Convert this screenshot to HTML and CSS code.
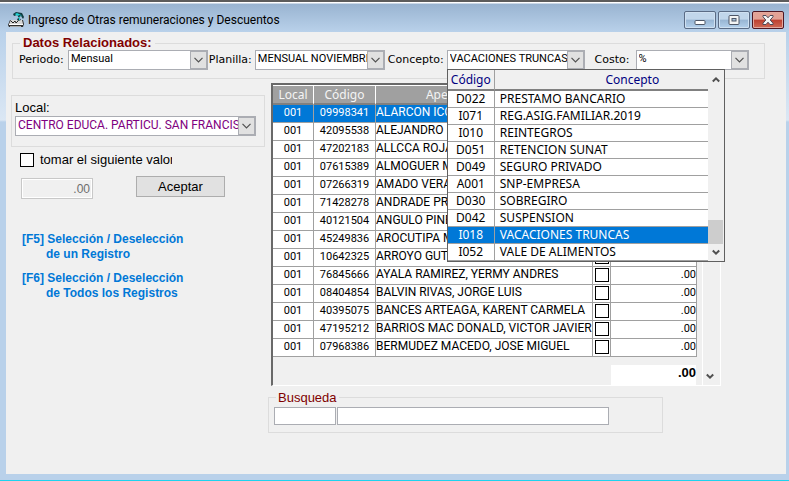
FILE: index.html
```html
<!DOCTYPE html>
<html lang="es">
<head>
<meta charset="utf-8">
<title>Ingreso de Otras remuneraciones y Descuentos</title>
<link rel="stylesheet" href="styles.css">
</head>
<body>
<svg class="symbols" width="0" height="0" aria-hidden="true">
  <symbol id="chevron" viewBox="0 0 9 6"><path d="M.5 .8 4.5 4.8 8.5 .8" fill="none" stroke="currentColor" stroke-width="1.2"/></symbol>
  <symbol id="arrow" viewBox="0 0 8 7"><path d="M.8 1.5 4 4.7 7.2 1.5" fill="none" stroke="currentColor" stroke-width="2"/></symbol>
</svg>
<div class="window">
  <header class="titlebar">
    <svg class="app-icon" viewBox="0 0 17 16" aria-hidden="true">
      <path d="M2 8h13l1 4-1 3H1l-1-2z" fill="#303030"/>
      <path d="M3 8h11l1 4H1z" fill="#d8d8d8"/>
      <path d="M1 12h14v1H1z" fill="#fff"/>
      <path d="M2 14h11v1H2z" fill="#aaa"/>
      <path d="m3 9 2 2 2-2 1 2 2-2" fill="none" stroke="#222"/>
      <path d="M5 2 8 0l6 1 2 4-1 2-2-3-2 1 2 3-3 1-1-2 2-1-2-3-3 1z" fill="#123c42"/>
      <path d="m7 2 2-1 4 2 1 2-2-2-3 1z" fill="#22d3d3"/>
      <path d="m10 5 2 2-1 1" fill="none" stroke="#22d3d3"/>
    </svg>
    <h1>Ingreso de Otras remuneraciones y Descuentos</h1>
    <div class="controls">
      <button type="button" aria-label="Minimizar"><svg viewBox="0 0 12 10"><rect x="1" y="5.5" width="10" height="4" rx="1" fill="#fff" stroke="#4e5666"/></svg></button>
      <button type="button" aria-label="Restaurar"><svg viewBox="0 0 12 10"><rect x="1" y=".5" width="10" height="9" rx="1" fill="#f4f4f4" stroke="#4e5666"/><rect x="4" y="3.5" width="4" height="2.5" fill="#a9c4de" stroke="#4e5666"/></svg></button>
      <button type="button" class="close" aria-label="Cerrar"><svg viewBox="0 0 12 10"><path d="M1 .5h3L6 2.8 8 .5h3v1.3L8.2 5 11 8.200V9.500H8L6 7.200 4 9.500H1V8.200L3.800 5 1 1.800z" fill="#f6f6f6" stroke="#4d4a58"/></svg></button>
    </div>
  </header>

  <main class="client">
    <fieldset class="filters">
      <legend>Datos Relacionados:</legend>
      <div class="filter-row">
        <label for="periodo">Periodo:</label>
        <div class="combo w-periodo"><select id="periodo"><option>Mensual</option></select><span class="drop"><svg><use href="#chevron"/></svg></span></div>
        <label for="planilla">Planilla:</label>
        <div class="combo w-planilla"><select id="planilla"><option>MENSUAL NOVIEMBRE</option></select><span class="drop"><svg><use href="#chevron"/></svg></span></div>
        <label for="concepto">Concepto:</label>
        <div class="combo w-concepto">
          <select id="concepto"><option>VACACIONES TRUNCAS</option></select><span class="drop"><svg><use href="#chevron"/></svg></span>
          <div class="popup">
            <table>
              <colgroup><col class="c-code"><col></colgroup>
              <thead><tr><th>Código</th><th class="wide">Concepto</th></tr></thead>
              <tbody>
                <tr><td>D022</td><td>PRESTAMO BANCARIO</td></tr>
                <tr><td>I071</td><td>REG.ASIG.FAMILIAR.2019</td></tr>
                <tr><td>I010</td><td>REINTEGROS</td></tr>
                <tr><td>D051</td><td>RETENCION SUNAT</td></tr>
                <tr><td>D049</td><td>SEGURO PRIVADO</td></tr>
                <tr><td>A001</td><td>SNP-EMPRESA</td></tr>
                <tr><td>D030</td><td>SOBREGIRO</td></tr>
                <tr><td>D042</td><td>SUSPENSION</td></tr>
                <tr class="selected"><td>I018</td><td>VACACIONES TRUNCAS</td></tr>
                <tr><td>I052</td><td>VALE DE ALIMENTOS</td></tr>
              </tbody>
            </table>
            <div class="popup-scroll">
              <svg class="up"><use href="#arrow"/></svg>
              <span class="thumb"></span>
              <svg><use href="#arrow"/></svg>
            </div>
          </div>
        </div>
        <label for="costo" class="costo">Costo:</label>
        <div class="combo w-costo"><select id="costo"><option>%</option></select><span class="drop"><svg><use href="#chevron"/></svg></span></div>
      </div>
    </fieldset>

    <div class="columns">
      <section class="side">
        <div class="local">
          <label for="local">Local:</label>
          <div class="combo"><select id="local"><option>CENTRO EDUCA. PARTICU. SAN FRANCISCO</option></select><span class="drop"><svg><use href="#chevron"/></svg></span></div>
        </div>
        <div class="take">
          <input type="checkbox" id="tomar"><label for="tomar">tomar el siguiente valor</label>
        </div>
        <div class="apply">
          <input type="text" value=".00" aria-label="Valor" disabled>
          <button type="button">Aceptar</button>
        </div>
        <div class="keys">
          <p>[F5] Selección / Deselección<br><span>de un Registro</span></p>
          <p>[F6] Selección / Deselección<br><span>de Todos los Registros</span></p>
        </div>
      </section>

      <section class="data">
        <div class="grid-frame">
          <div class="grid-main">
            <table class="people">
              <colgroup><col class="c-local"><col class="c-id"><col><col class="c-check"><col class="c-amount"></colgroup>
              <thead><tr><th>Local</th><th>Código</th><th>Apellidos y Nombres</th><th></th><th></th></tr></thead>
              <tbody>
                <tr class="selected"><td>001</td><td>09998341</td><td>ALARCON ICO</td><td><input type="checkbox" aria-label="09998341"></td><td>.00</td></tr>
                <tr><td>001</td><td>42095538</td><td>ALEJANDRO D</td><td><input type="checkbox" aria-label="42095538"></td><td>.00</td></tr>
                <tr><td>001</td><td>47202183</td><td>ALLCCA ROJA</td><td><input type="checkbox" aria-label="47202183"></td><td>.00</td></tr>
                <tr><td>001</td><td>07615389</td><td>ALMOGUER M</td><td><input type="checkbox" aria-label="07615389"></td><td>.00</td></tr>
                <tr><td>001</td><td>07266319</td><td>AMADO VERA</td><td><input type="checkbox" aria-label="07266319"></td><td>.00</td></tr>
                <tr><td>001</td><td>71428278</td><td>ANDRADE PR</td><td><input type="checkbox" aria-label="71428278"></td><td>.00</td></tr>
                <tr><td>001</td><td>40121504</td><td>ANGULO PINE</td><td><input type="checkbox" aria-label="40121504"></td><td>.00</td></tr>
                <tr><td>001</td><td>45249836</td><td>AROCUTIPA M</td><td><input type="checkbox" aria-label="45249836"></td><td>.00</td></tr>
                <tr><td>001</td><td>10642325</td><td>ARROYO GUT</td><td><input type="checkbox" aria-label="10642325"></td><td>.00</td></tr>
                <tr><td>001</td><td>76845666</td><td>AYALA RAMIREZ, YERMY ANDRES</td><td><input type="checkbox" aria-label="76845666"></td><td>.00</td></tr>
                <tr><td>001</td><td>08404854</td><td>BALVIN RIVAS, JORGE LUIS</td><td><input type="checkbox" aria-label="08404854"></td><td>.00</td></tr>
                <tr><td>001</td><td>40395075</td><td>BANCES ARTEAGA, KARENT CARMELA</td><td><input type="checkbox" aria-label="40395075"></td><td>.00</td></tr>
                <tr><td>001</td><td>47195212</td><td>BARRIOS MAC DONALD, VICTOR JAVIER</td><td><input type="checkbox" aria-label="47195212"></td><td>.00</td></tr>
                <tr><td>001</td><td>07968386</td><td>BERMUDEZ MACEDO, JOSE MIGUEL</td><td><input type="checkbox" aria-label="07968386"></td><td>.00</td></tr>
              </tbody>
            </table>
            <output class="total">.00</output>
          </div>
          <div class="grid-scroll"><svg><use href="#arrow"/></svg></div>
        </div>
        <fieldset class="search">
          <legend>Busqueda</legend>
          <div class="search-row">
            <input type="text" class="s-code" aria-label="Código">
            <input type="text" class="s-name" aria-label="Nombre">
          </div>
        </fieldset>
      </section>
    </div>
  </main>
</div>
</body>
</html>
```
FILE: styles.css
```css
* { box-sizing: border-box; }

body {
  margin: 0;
  color: #000;
  font: 12px/16px "Liberation Sans", Arial, sans-serif;
}

h1, p { margin: 0; }
.symbols { display: block; position: absolute; }

/* Window frame */
.window {
  display: flex;
  flex-direction: column;
  min-height: 100vh;
  padding: 0 3px 6px 6px;
  border-top: 2px solid #5c5c5c;
  border-bottom: 1px solid #1ed2ee;
  background: linear-gradient(#fff 0 1px, #99b4d1 2px, #b9d1ea 30px, #dbe7f4 118px, #b9d1ea 120px);
}

.titlebar {
  display: flex;
  align-items: center;
  height: 30px;
  padding: 6px 2px 0 2px;
}

.app-icon { width: 17px; height: 16px; margin-right: 3px; }

.titlebar h1 {
  flex: 1;
  font: 12px/18px Roboto, sans-serif;
}

.controls { display: flex; gap: 2px; }

.controls button {
  display: flex;
  align-items: center;
  justify-content: center;
  width: 32px;
  height: 18px;
  padding: 0;
  border: 1px solid #5a6b85;
  border-radius: 2px;
  background: linear-gradient(#c1d6eb 0 45%, #98b5d3 50%, #b4d0ec);
  box-shadow: inset 0 0 0 1px #cfe0f1;
}

.controls .close {
  border-color: #4f1722;
  background: linear-gradient(#e3a295 0 45%, #bd4030 50%, #cf6a56);
  box-shadow: inset 0 0 0 1px #e2a89e;
}

.controls svg { width: 12px; height: 10px; }

.client {
  flex: 1;
  padding: 4px 21px 20px 5px;
  background: #f0f0f0;
}

/* Combo boxes */
.combo {
  display: flex;
  position: relative;
  height: 20px;
  border: 1px solid #abadb3;
  background: #fff;
}

.combo select {
  flex: 1;
  min-width: 0;
  height: 16px;
  padding: 0 0 0 2px;
  border: 0;
  outline: 0;
  appearance: none;
  background: transparent;
  color: #000;
  font: 11px/16px Roboto, sans-serif;
  text-overflow: clip;
}

.drop {
  display: flex;
  align-items: center;
  justify-content: center;
  flex: none;
  width: 17px;
  border: 1px solid #abadb3;
  background: #e1e1e1;
  color: #505050;
  pointer-events: none;
}

.drop svg { width: 9px; height: 6px; }

/* Top filters */
fieldset {
  min-width: 0;
  margin: 0;
  border: 1px solid #dcdcdc;
}

legend { color: #800000; }

.filters {
  margin-left: 1px;
  padding: 0 15px 8px 5px;
}

.filters legend {
  margin-left: 2px;
  padding: 0 3px;
  font: bold 13px/14px "Liberation Sans", Arial, sans-serif;
}

.filter-row { display: flex; align-items: center; }

.filter-row > label {
  flex: none;
  min-width: 47px;
  padding-left: 1px;
  font: 11px/20px "DejaVu Sans", sans-serif;
}

.filter-row > label[for="concepto"] { min-width: 62px; padding-left: 3px; }
.filter-row > label.costo { min-width: 51px; padding-left: 10px; }

.filter-row .combo { min-width: 0; }
.w-periodo { flex: 141 1 0; margin-left: 3px; }
.w-planilla { flex: 131 1 0; }
.w-concepto { flex: 139 1 0; }
.w-costo { flex: 114 1 0; }

/* Concept list */
.popup {
  display: flex;
  position: absolute;
  z-index: 1;
  top: 18px;
  left: -1px;
  width: 278px;
  border: 1px solid #606060;
  background: #f0f0f0;
}

table { border-spacing: 0; table-layout: fixed; }
th, td { padding: 0; font-weight: normal; white-space: nowrap; overflow: hidden; }

.popup table {
  flex: 1;
  width: 0;
  font: 12px/16px "Noto Sans", sans-serif;
}

.c-code { width: 47px; }

.popup th {
  height: 21px;
  border-right: 1px solid #a0a0a0;
  border-bottom: 2px solid #808080;
  color: #000080;
}

.popup th.wide { padding-left: 62px; border-right: 0; }

.popup td {
  height: 17px;
  padding-left: 5px;
  border-bottom: 1px solid #a0a0a0;
  background: #fff;
}

.popup td:first-child {
  padding: 0;
  border-right: 1px solid #a0a0a0;
  text-align: center;
}

.popup .selected td, .people .selected td { background: #0078d7; color: #fff; }

.popup-scroll {
  display: flex;
  flex-direction: column;
  align-items: center;
  width: 16px;
  padding: 6px 0 5px;
  color: #505050;
}

.popup-scroll svg, .grid-scroll svg { width: 8px; height: 7px; }
.popup-scroll .up { transform: rotate(180deg); }

.thumb {
  width: 15px;
  height: 24px;
  margin: auto 0 5px;
  background: #cdcdcd;
}

/* Left panel */
.columns {
  display: grid;
  grid-template-columns: 254px minmax(0, 450px);
  column-gap: 6px;
}

.side { padding-top: 16px; }

.local {
  height: 52px;
  padding: 3px 8px 0 3px;
  border: 1px solid #dcdcdc;
}

.local label { display: block; font-size: 13px; line-height: 17px; }
.local .combo select { color: #800080; font-size: 12px; }

.take {
  display: flex;
  align-items: center;
  height: 16px;
  margin: 5px 0 0 9px;
}

input[type="checkbox"] {
  flex: none;
  width: 14px;
  height: 14px;
  margin: 0;
  border: 1px solid #000;
  appearance: none;
  background: #fff;
}

.take label {
  width: 138px;
  padding-left: 6px;
  overflow: hidden;
  font-size: 13px;
  white-space: nowrap;
}

.apply {
  display: flex;
  gap: 43px;
  margin: 8px 0 0 10px;
}

.apply input {
  width: 72px;
  height: 21px;
  margin-top: 2px;
  padding: 0 2px;
  border: 1px solid #c8c8c8;
  background: #f0f0f0;
  box-shadow: inset 0 0 0 1px #fff;
  color: #6d6d6d;
  font: 12px/16px "Liberation Sans", Arial, sans-serif;
  text-align: right;
}

.apply button {
  width: 89px;
  height: 21px;
  padding: 0;
  border: 1px solid #adadad;
  background: #e1e1e1;
  color: #000;
  font: 13px/16px "Liberation Sans", Arial, sans-serif;
}

.keys {
  margin: 33px 0 0 11px;
  color: #0078d7;
  font-weight: bold;
  line-height: 15px;
}

.keys p { margin-bottom: 9px; }
.keys span { padding-left: 24px; }

/* Employee grid */
.data { padding-top: 4px; }

.grid-frame {
  display: flex;
  gap: 5px;
  border: solid;
  border-width: 2px 1px 1px 2px;
  border-color: #696969 #fff #fff #696969;
}

.grid-main { flex: 1; min-width: 0; }

.people {
  width: 100%;
  font: 11px/15px Roboto, sans-serif;
}

.c-local { width: 41px; }
.c-id { width: 62px; }
.c-check { width: 18px; }
.c-amount { width: 86px; }

.people th {
  height: 20px;
  border-top: 1px solid #fff;
  border-right: 1px solid #fff;
  border-bottom: 2px solid #808080;
  background: #a0a0a0;
  color: #f4f4f4;
  font: 12px/16px "Noto Sans", sans-serif;
}

.people td {
  height: 18px;
  border-right: 1px solid #a0a0a0;
  border-bottom: 1px solid #a0a0a0;
  background: #fff;
  text-align: center;
  vertical-align: top;
}

.people td:nth-child(3) { font-size: 12px; text-align: left; }
.people td:nth-child(5) { text-align: right; }
.people td input { display: block; margin: 1px auto 0; }

.total {
  display: block;
  width: 85px;
  height: 20px;
  margin: 8px 1px 0 auto;
  background: #fff;
  font: bold 13px/16px "Liberation Sans", Arial, sans-serif;
  text-align: right;
}

.grid-scroll {
  display: flex;
  align-items: flex-end;
  width: 18px;
  padding: 0 0 5px 3px;
  border-left: 1px solid #fff;
  color: #505050;
}

/* Search */
.search {
  max-width: 395px;
  margin: 4px 0 0 -3px;
  padding: 2px 53px 7px 5px;
}

.search legend {
  margin-left: 2px;
  padding: 0 2px;
  font-size: 13px;
  line-height: 15px;
}

.search-row { display: flex; gap: 1px; }

.search input {
  height: 18px;
  padding: 0 2px;
  border: 1px solid #abadb3;
  background: #fff;
  font: 12px/16px "Liberation Sans", Arial, sans-serif;
}

.s-code { width: 62px; }
.s-name { flex: 1; min-width: 0; }
```
